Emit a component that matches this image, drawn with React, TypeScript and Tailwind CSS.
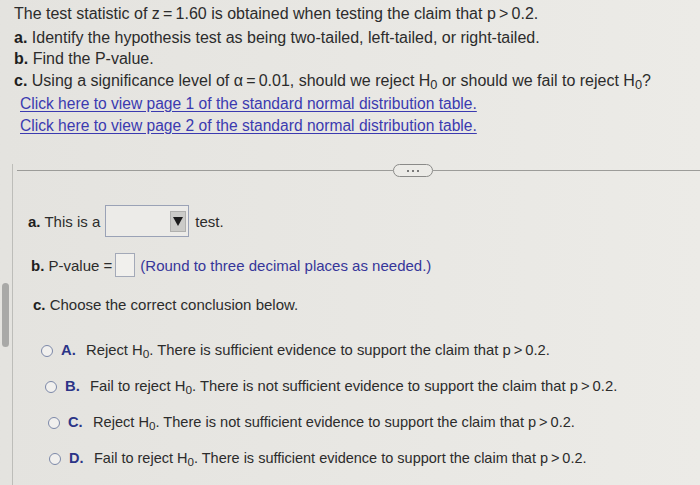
import type { ReactNode } from "react";

const H0 = () => (
  <span>
    H<sub className="text-[0.8em] relative top-[0.25em] align-baseline">0</sub>
  </span>
);

const OPTIONS: { key: string; row: string; body: ReactNode }[] = [
  {
    key: "A",
    row: "ml-[13px] text-[14.8px]",
    body: (
      <>
        Reject <H0 />. There is sufficient evidence to support the claim that p&thinsp;&gt;&thinsp;0.2.
      </>
    ),
  },
  {
    key: "B",
    row: "ml-[17px] text-[14.8px]",
    body: (
      <>
        Fail to reject <H0 />. There is not sufficient evidence to support the claim that p&thinsp;&gt;&thinsp;0.2.
      </>
    ),
  },
  {
    key: "C",
    row: "ml-[20px] text-[14.6px]",
    body: (
      <>
        Reject <H0 />. There is not sufficient evidence to support the claim that p&thinsp;&gt;&thinsp;0.2.
      </>
    ),
  },
  {
    key: "D",
    row: "ml-[21px] text-[14.5px]",
    body: (
      <>
        Fail to reject <H0 />. There is sufficient evidence to support the claim that p&thinsp;&gt;&thinsp;0.2.
      </>
    ),
  },
];

export default function App() {
  return (
    <div
      className="w-[700px] h-[485px] overflow-hidden bg-linear-to-r from-[#e4e3df] to-[#ecebe7] text-[#2c2c2c] text-[15px] leading-[21px] relative"
      style={{ fontFamily: '"Liberation Sans", Arial, sans-serif' }}
    >
      {/* question text */}
      <div className="pl-[14px] pt-[3px] text-[16px] leading-[21px]">
        <div>The test statistic of z&thinsp;=&thinsp;1.60 is obtained when testing the claim that p&thinsp;&gt;&thinsp;0.2.</div>
        <div className="mt-[3px]">
          <b className="text-[#1e1e1e]">a.</b> Identify the hypothesis test as being two-tailed, left-tailed, or right-tailed.
        </div>
        <div>
          <b className="text-[#1e1e1e]">b.</b> Find the P-value.
        </div>
        <div className="mt-[1px]">
          <b className="text-[#1e1e1e]">c.</b> Using a significance level of α&thinsp;=&thinsp;0.01, should we reject <H0 /> or should we fail to reject <H0 />?
        </div>
        <div className="pl-[6px] mt-[2px] text-[15.6px] leading-[22px] text-[#3b3ab0]">
          <div className="underline underline-offset-2">Click here to view page 1 of the standard normal distribution table.</div>
          <div className="underline underline-offset-2">Click here to view page 2 of the standard normal distribution table.</div>
        </div>
      </div>

      {/* answer panel */}
      <div className="border-l border-[#bdbdb9] ml-[12px] mt-[6px] h-[360px]">
        {/* divider with ... button */}
        <div className="mt-[27px] ml-[4px] flex items-center">
          <div className="w-[376px] h-px bg-[#9c9c99]" />
          <div className="w-[40px] h-[13px] rounded-full border border-[#8a8a88] bg-[#ecebe7] flex items-center justify-center gap-[3px]">
            <span className="w-[2px] h-[2px] rounded-full bg-[#555]" />
            <span className="w-[2px] h-[2px] rounded-full bg-[#555]" />
            <span className="w-[2px] h-[2px] rounded-full bg-[#555]" />
          </div>
          <div className="flex-1 h-px bg-[#9c9c99]" />
        </div>

        <div className="pl-[15px]">
          <div className="flex items-center mt-[28px]">
            <span>
              <b className="text-[#1e1e1e]">a.</b> This is a
            </span>
            <div className="ml-[5px] w-[84px] h-[32px] border border-[#9aa2b6] bg-[#ecebe8] flex justify-end items-center pr-[2px]">
              <div className="w-[16px] h-[21px] bg-[#cbcbc8] border border-[#b0b0ae] flex items-center justify-center">
                <svg width="10" height="9" viewBox="0 0 10 9">
                  <path d="M0 0 H10 L5 9 Z" fill="#1c1c1c" />
                </svg>
              </div>
            </div>
            <span className="ml-[6px]">test.</span>
          </div>

          <div className="flex items-center mt-[16px] ml-[3px]">
            <span>
              <b className="text-[#1e1e1e]">b.</b> P-value =
            </span>
            <div className="ml-[3px] w-[20px] h-[24px] border border-[#a3a9b8] bg-[#f1f0ed]" />
            <span className="ml-[5px] text-[#36369a]">(Round to three decimal places as needed.)</span>
          </div>

          <div className="mt-[17px] ml-[5px]">
            <b className="text-[#1e1e1e]">c.</b> Choose the correct conclusion below.
          </div>

          <div className="mt-[25px] flex flex-col gap-[15px]">
            {OPTIONS.map((o) => (
              <div key={o.key} className={`flex items-center ${o.row}`}>
                <span className="w-[12px] h-[12px] rounded-full border-[1.5px] border-[#7c88a8] bg-[#f1f0ee] shrink-0" />
                <b className="ml-[8px] w-[25px] text-[#2b3487]">{o.key}.</b>
                <span>{o.body}</span>
              </div>
            ))}
          </div>
        </div>
      </div>

      {/* scrollbar thumb */}
      <div className="absolute left-[2px] top-[283px] w-[7px] h-[64px] rounded-full bg-[#a9a9a7]" />
    </div>
  );
}
